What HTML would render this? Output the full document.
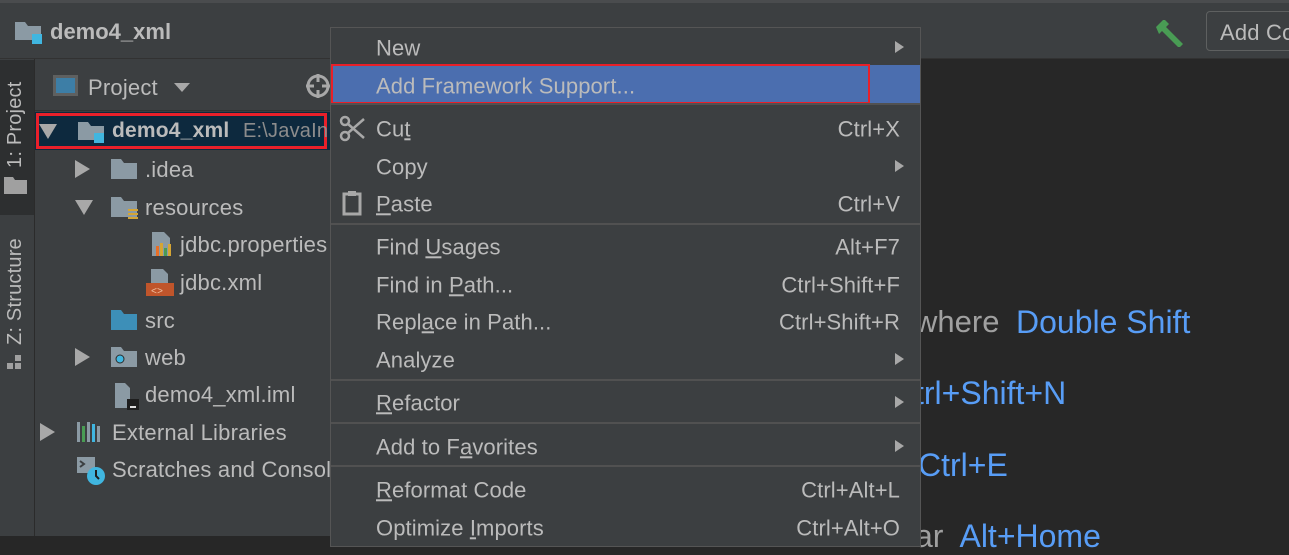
<!DOCTYPE html>
<html><head><meta charset="utf-8"><style>
*{margin:0;padding:0;box-sizing:border-box}
body{width:1289px;height:536px;overflow:hidden;background:#272727;font-family:"Liberation Sans","DejaVu Sans",sans-serif;position:relative;color:#bbbbbb}
.a{position:absolute;white-space:nowrap}
.t{font-size:22px;color:#bbbbbb;letter-spacing:0.2px}
.m{font-size:22px;letter-spacing:0.1px;color:#bbbbbb;position:absolute;white-space:nowrap;transform:translateY(-45%)}
.sc{right:20px}
.arr{position:absolute;right:16px;width:0;height:0;border-left:9px solid #a8a8a8;border-top:6px solid transparent;border-bottom:6px solid transparent;transform:translateY(-50%)}
.sep{position:absolute;left:0;right:0;height:2px;background:#515151}
.tri{position:absolute;width:0;height:0}
.tr{border-left:15px solid #a8a8a8;border-top:9px solid transparent;border-bottom:9px solid transparent}
.td{border-top:15px solid #a8a8a8;border-left:9px solid transparent;border-right:9px solid transparent}
.blue{color:#589df6}
u{text-decoration:underline}
</style></head><body>
<div class="a" style="left:0;top:0;width:1289px;height:59px;background:#3c3f41;border-top:3px solid #4a4c4e;border-bottom:1px solid #323232"></div>
<svg class="a" style="left:14px;top:20px" width="30" height="26"><path d="M1 2h10l3 4h13v14H1z" fill="#8b9aa4"/><rect x="18" y="14" width="10" height="10" fill="#40b6e0"/></svg>
<div class="a" style="left:50px;top:19px;font-size:22px;font-weight:bold;color:#bbbbbb">demo4_xml</div>
<svg class="a" style="left:1154px;top:17px" width="34" height="30"><path d="M2 10l7-7 2 0 4 4-3 3 17 17-4 4-17-17-3 3z" fill="#499c54"/></svg>
<div class="a" style="left:1206px;top:11px;width:100px;height:40px;border:1px solid #5e6060;border-radius:4px;background:#3c3f41"></div>
<div class="a t" style="left:1220px;top:20px;font-size:22px">Add Co</div>
<div class="a" style="left:0;top:59px;width:35px;height:477px;background:#3c3f41;border-right:1px solid #2b2b2b"></div>
<div class="a" style="left:0;top:60px;width:34px;height:155px;background:#2d2f30"></div>
<div class="a t" style="left:4px;top:168px;transform:rotate(-90deg);transform-origin:0 0;font-size:20px;color:#bbb">1: Project</div>
<svg class="a" style="left:4px;top:176px" width="24" height="18"><path d="M0 1h9l2 3h12v14H0z" fill="#a0a0a0"/></svg>
<div class="a t" style="left:4px;top:345px;transform:rotate(-90deg);transform-origin:0 0;font-size:20px;color:#bbb">Z: Structure</div>
<svg class="a" style="left:6px;top:352px" width="18" height="18"><rect x="9" y="3" width="6" height="6" fill="#a0a0a0"/><rect x="1" y="11" width="6" height="6" fill="#a0a0a0"/><rect x="9" y="11" width="6" height="6" fill="#a0a0a0"/></svg>
<div class="a" style="left:35px;top:59px;width:295px;height:477px;background:#3c3f41"></div>
<div class="a" style="left:35px;top:110px;width:295px;height:1px;background:#323232"></div>
<svg class="a" style="left:52px;top:73px" width="28" height="26"><rect x="1" y="2" width="25" height="21" fill="#5e6060"/><rect x="4" y="5" width="19" height="15" fill="#3d7ea6"/></svg>
<div class="a t" style="left:88px;top:75px">Project</div>
<div class="tri" style="left:174px;top:83px;border-top:9px solid #a8a8a8;border-left:8px solid transparent;border-right:8px solid transparent"></div>
<svg class="a" style="left:305px;top:73px" width="28" height="28"><circle cx="13" cy="13" r="10" stroke="#a8a8a8" stroke-width="3" fill="none"/><path d="M13 1v8M13 17v8M1 13h8M17 13h8" stroke="#a8a8a8" stroke-width="3"/></svg>
<div class="a" style="left:35px;top:112px;width:295px;height:38px;background:#0d293e"></div>
<div class="a" style="left:36px;top:113px;width:291px;height:36px;border:3px solid #e8202a"></div>
<div class="tri td" style="left:39px;top:124px"></div>
<svg class="a" style="left:77px;top:120px" width="30" height="26"><path d="M1 2h10l3 4h13v14H1z" fill="#8b9aa4"/><rect x="17" y="13" width="10" height="10" fill="#40b6e0"/></svg>
<div class="a t" style="left:112px;top:119px;font-weight:bold;font-size:21px">demo4_xml</div>
<div class="a t" style="left:243px;top:120px;color:#8c8c8c;font-size:20px">E:\JavaIn</div>
<div class="tri tr" style="left:75px;top:160px"></div>
<svg class="a" style="left:110px;top:158px" width="28" height="22"><path d="M1 1h10l3 4h13v16H1z" fill="#8b9aa4"/></svg>
<div class="a t" style="left:145px;top:157px">.idea</div>
<div class="tri td" style="left:75px;top:200px"></div>
<svg class="a" style="left:110px;top:196px" width="30" height="26"><path d="M1 1h10l3 4h13v16H1z" fill="#8b9aa4"/><path d="M18 14h10M18 18h10M18 22h10" stroke="#d5a534" stroke-width="2"/></svg>
<div class="a t" style="left:145px;top:195px">resources</div>
<svg class="a" style="left:148px;top:230px" width="28" height="28"><path d="M4 2h12l6 6v18H4z" fill="#8b9aa4"/><rect x="8" y="16" width="3" height="10" fill="#e86f27"/><rect x="12" y="13" width="3" height="13" fill="#d5a534"/><rect x="16" y="18" width="3" height="8" fill="#499c54"/><rect x="20" y="14" width="3" height="12" fill="#d5a534"/></svg>
<div class="a t" style="left:180px;top:232px">jdbc.properties</div>
<svg class="a" style="left:145px;top:267px" width="30" height="30"><path d="M6 2h12l5 5v12H6z" fill="#8b9aa4"/><rect x="1" y="16" width="28" height="13" fill="#c0552b"/><text x="6" y="27" font-size="10" fill="#f0c0a0" font-family="Liberation Mono">&lt;&gt;</text></svg>
<div class="a t" style="left:180px;top:270px">jdbc.xml</div>
<svg class="a" style="left:110px;top:309px" width="28" height="22"><path d="M1 1h10l3 4h13v16H1z" fill="#3d8fb8"/></svg>
<div class="a t" style="left:145px;top:308px">src</div>
<div class="tri tr" style="left:75px;top:348px"></div>
<svg class="a" style="left:110px;top:346px" width="28" height="22"><path d="M1 1h10l3 4h13v16H1z" fill="#8b9aa4"/><circle cx="10" cy="13" r="4" fill="#40b6e0" stroke="#2b2b2b" stroke-width="1"/></svg>
<div class="a t" style="left:145px;top:345px">web</div>
<svg class="a" style="left:113px;top:381px" width="28" height="30"><path d="M2 2h10l5 5v20H2z" fill="#8b9aa4"/><rect x="14" y="18" width="12" height="11" fill="#1e1e1e"/><rect x="17" y="25" width="6" height="2" fill="#ddd"/></svg>
<div class="a t" style="left:145px;top:382px">demo4_xml.iml</div>
<div class="tri tr" style="left:40px;top:423px"></div>
<svg class="a" style="left:76px;top:420px" width="30" height="24"><rect x="1" y="2" width="3" height="20" fill="#8b9aa4"/><rect x="6" y="6" width="3" height="16" fill="#499c54"/><rect x="11" y="2" width="3" height="20" fill="#8b9aa4"/><rect x="16" y="4" width="3" height="18" fill="#40b6e0"/><rect x="21" y="6" width="3" height="16" fill="#8b9aa4"/></svg>
<div class="a t" style="left:112px;top:420px">External Libraries</div>
<svg class="a" style="left:76px;top:455px" width="30" height="32"><rect x="1" y="2" width="18" height="16" fill="#8b9aa4"/><path d="M4 6l4 3-4 3" stroke="#3c3f41" stroke-width="2" fill="none"/><circle cx="20" cy="21" r="9" fill="#40b6e0"/><path d="M20 15v6l3 3" stroke="#1e1e1e" stroke-width="2" fill="none"/></svg>
<div class="a t" style="left:112px;top:457px">Scratches and Console</div>
<div class="a" style="left:915px;top:304px;font-size:31px;color:#a0a0a0">where</div>
<div class="a blue" style="left:1016px;top:304px;font-size:32px">Double Shift</div>
<div class="a blue" style="left:915px;top:375px;font-size:32px">trl+Shift+N</div>
<div class="a blue" style="left:918px;top:447px;font-size:32px">Ctrl+E</div>
<div class="a" style="left:915px;top:518px;font-size:32px;color:#a0a0a0">ar&nbsp; <span class="blue">Alt+Home</span></div>
<div class="a" style="left:330px;top:27px;width:591px;height:520px;background:#3c3f41;border:1px solid #555"></div>
<div class="a" style="left:331px;top:27px;width:589px;height:520px">
 <div class="a" style="left:0;top:38px;width:589px;height:38px;background:#4b6eaf"></div>
 <div class="a" style="left:0;top:37px;width:539px;height:40px;border:2px solid #e8202a"></div>
 <div class="m" style="left:45px;top:20px">New</div><div class="arr" style="top:20px"></div>
 <div class="m" style="left:45px;top:58px">Add Framework Support...</div>
 <div class="sep" style="top:76px"></div>
 <svg class="a" style="left:8px;top:88px" width="28" height="28"><circle cx="6" cy="21" r="4" stroke="#a8a8a8" stroke-width="2.5" fill="none"/><circle cx="6" cy="6" r="4" stroke="#a8a8a8" stroke-width="2.5" fill="none"/><path d="M9 9l16 14M9 18L25 4" stroke="#a8a8a8" stroke-width="2.5"/></svg>
 <div class="m" style="left:45px;top:101px">Cu<u>t</u></div><div class="m sc" style="top:101px">Ctrl+X</div>
 <div class="m" style="left:45px;top:139px">Copy</div><div class="arr" style="top:139px"></div>
 <svg class="a" style="left:11px;top:163px" width="20" height="26"><rect x="2" y="4" width="16" height="20" stroke="#a8a8a8" stroke-width="3" fill="none"/><rect x="6" y="1" width="8" height="5" fill="#a8a8a8"/></svg>
 <div class="m" style="left:45px;top:176px"><u>P</u>aste</div><div class="m sc" style="top:176px">Ctrl+V</div>
 <div class="sep" style="top:196px"></div>
 <div class="m" style="left:45px;top:219px">Find <u>U</u>sages</div><div class="m sc" style="top:219px">Alt+F7</div>
 <div class="m" style="left:45px;top:257px">Find in <u>P</u>ath...</div><div class="m sc" style="top:257px">Ctrl+Shift+F</div>
 <div class="m" style="left:45px;top:294px">Repl<u>a</u>ce in Path...</div><div class="m sc" style="top:294px">Ctrl+Shift+R</div>
 <div class="m" style="left:45px;top:332px">Analyze</div><div class="arr" style="top:332px"></div>
 <div class="sep" style="top:352px"></div>
 <div class="m" style="left:45px;top:375px"><u>R</u>efactor</div><div class="arr" style="top:375px"></div>
 <div class="sep" style="top:395px"></div>
 <div class="m" style="left:45px;top:419px">Add to F<u>a</u>vorites</div><div class="arr" style="top:419px"></div>
 <div class="sep" style="top:438px"></div>
 <div class="m" style="left:45px;top:462px"><u>R</u>eformat Code</div><div class="m sc" style="top:462px">Ctrl+Alt+L</div>
 <div class="m" style="left:45px;top:500px">Optimize <u>I</u>mports</div><div class="m sc" style="top:500px">Ctrl+Alt+O</div>
</div>
</body></html>
